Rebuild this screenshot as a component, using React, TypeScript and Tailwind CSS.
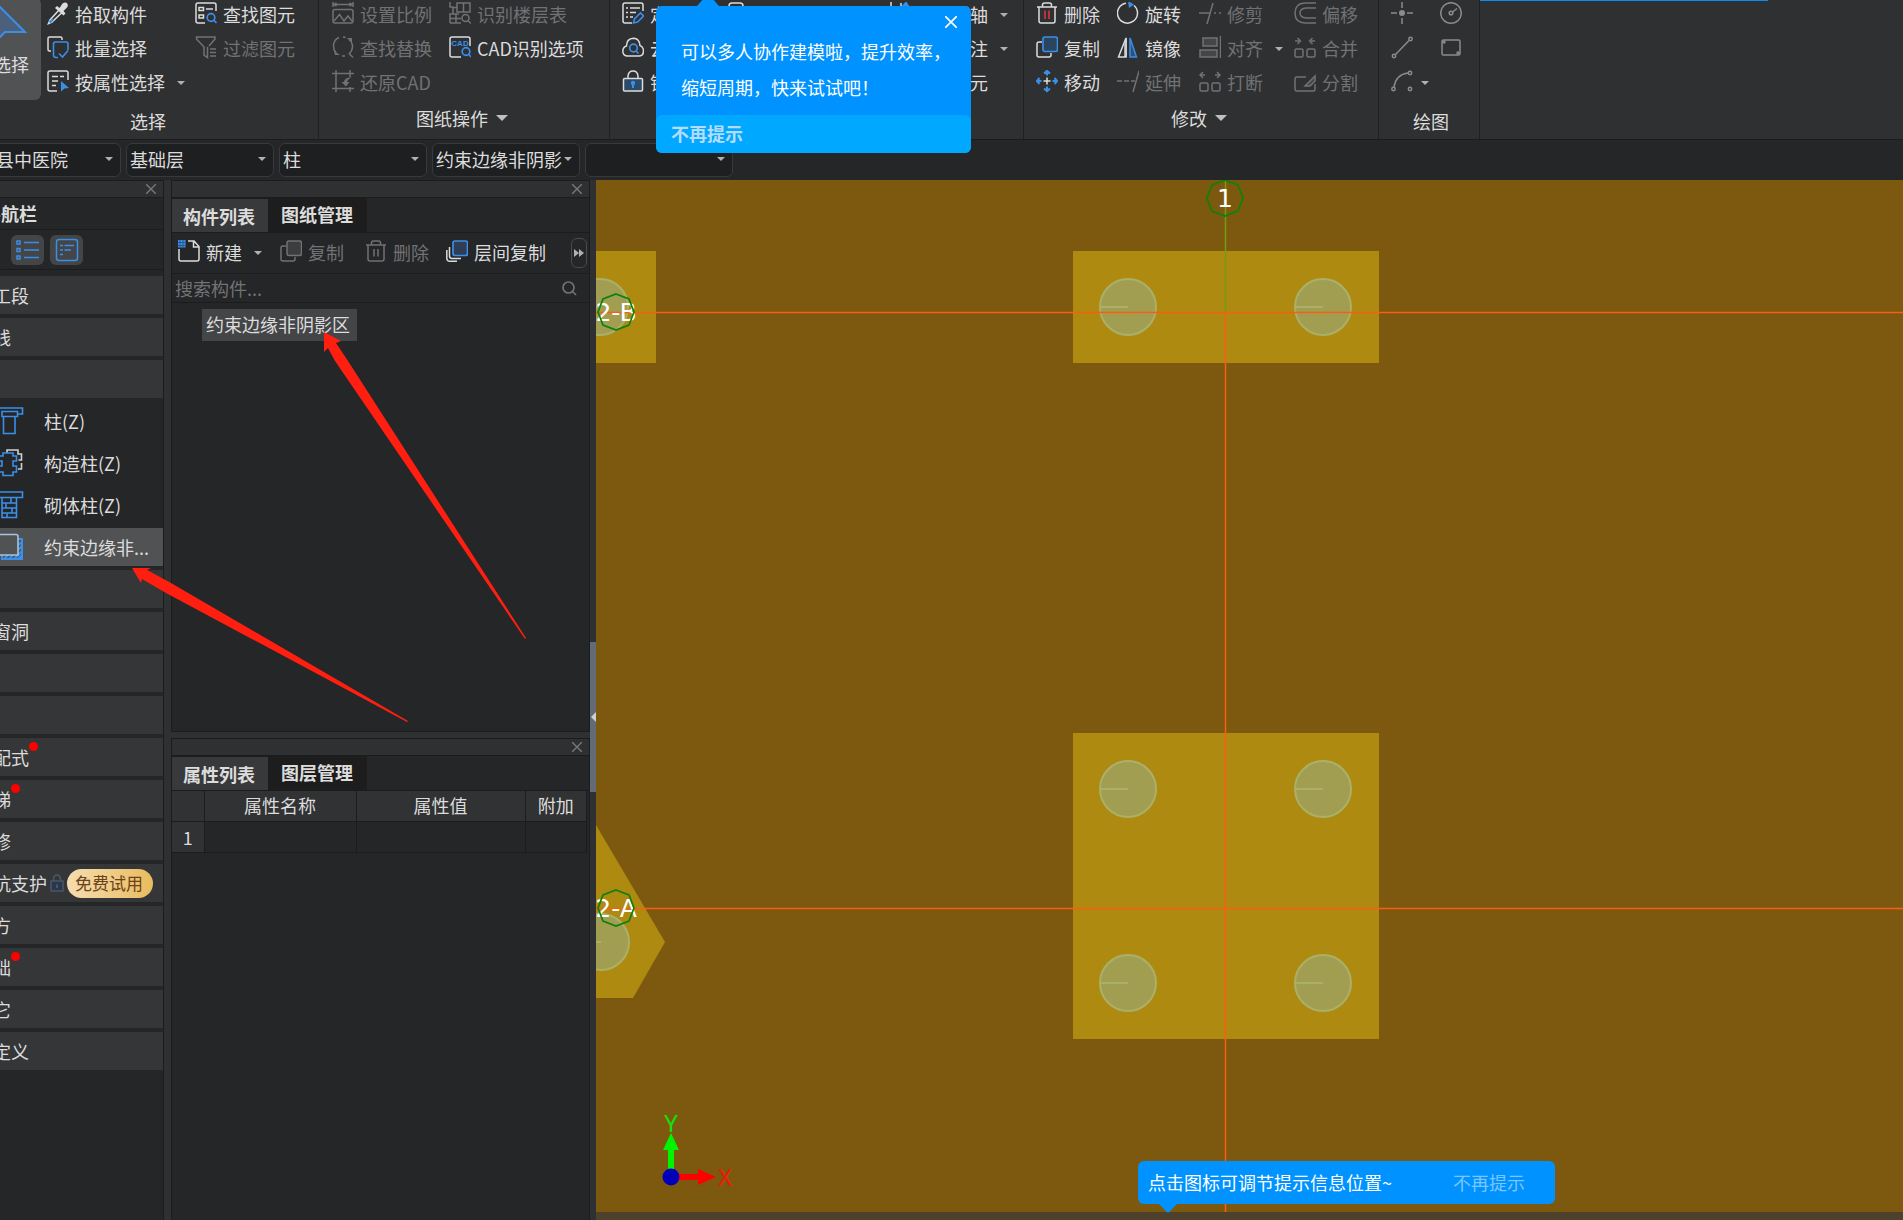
import type { ReactNode } from "react";

const BLUE = "#3a8fe8";

/* Ribbon icons are drawn on a 22px grid; the extra 4px below lifts them against the label */
function Icon({ children }: { children: ReactNode }) {
  return (
    <svg width="22" height="26" viewBox="0 0 22 26" fill="none" stroke="currentColor" strokeWidth="1.5" className="shrink-0" aria-hidden="true">
      {children}
    </svg>
  );
}

function Caret({ className = "" }: { className?: string }) {
  return (
    <svg width="8" height="4" viewBox="0 0 8 4" className={`shrink-0 ${className}`} aria-hidden="true">
      <path d="M0 0h8L4 4z" fill="#b0b1b3" />
    </svg>
  );
}

function CloseMark({ size = 10 }: { size?: number }) {
  return (
    <svg width={size} height={size} viewBox="0 0 10 10" stroke="currentColor" strokeWidth="1.4" aria-hidden="true">
      <path d="M0 0L10 10M10 0L0 10" />
    </svg>
  );
}

const icons = {
  dropper: (
    <>
      <path d="M12 8L3 18L1.500 21.500L5 20L14.500 11" />
      <path d="M8 6L10 4L12.500 6L15.500 1.500Q19 -.5 20.500 2Q21.500 4.500 19.500 6L16.500 9L18.500 11.500L16.500 13.500z" fill="currentColor" stroke="none" />
      <path d="M2.500 20.500L6 17.500" stroke={BLUE} strokeWidth="2.400" />
    </>
  ),
  batch: (
    <>
      <path d="M4 15H2.500Q1 15 1 13.500V2.500Q1 1 2.500 1H13.500Q15 1 15 2.500V4" />
      <path d="M21 14V8Q21 6 19 6H8.500Q6.500 6 6.500 8V19Q6.500 21.500 9 21.500H11M12 17.500L15.500 21L21 14.500" stroke={BLUE} strokeWidth="1.600" />
    </>
  ),
  byAttr: (
    <>
      <path d="M10 21H3Q1 21 1 19V3Q1 1 3 1H19Q21 1 21 3V10" />
      <path d="M5 6.500H11M13 6.500H17M5 11H11M5 15.500H9" />
      <path d="M14 11L22 18L17.500 18.500L14 21.500z" fill={BLUE} stroke="none" />
    </>
  ),
  findElem: (
    <>
      <path d="M10 21H3Q1 21 1 19V3Q1 1 3 1H19Q21 1 21 3V9" />
      <path d="M4 5.500H8.500V8.500H4zM4 13H8.500V16H4zM11 7H18" />
      <circle cx="16" cy="15.500" r="3.800" stroke={BLUE} strokeWidth="1.700" />
      <path d="M18.500 18L21.500 21" stroke={BLUE} strokeWidth="1.700" />
    </>
  ),
  filter: (
    <>
      <path d="M14 10L20 3V1H1.500V3L9 11V19L12.500 21.500V11" />
      <path d="M15 13H21M15 16.500H21M15 20H21" />
    </>
  ),
  scale: (
    <>
      <path d="M1 0V5M21 0V5M1 2.500H21M4.500 .8L2 2.500L4.500 4.200M17.500 .8L20 2.500L17.500 4.200" />
      <rect x="1" y="7.500" width="20" height="13.500" rx="2" />
      <path d="M2 19L7.500 12.500L12 19L16 14L20.500 19.500" />
    </>
  ),
  swap: (
    <>
      <path d="M7 1.500Q1.500 4 1.500 10Q1.500 14 4 17M11 1Q12.500 1 13.500 1.500M17 3.500Q20.500 6 20.500 11Q20 15.500 17 18" />
      <path d="M15 2H20V7z" fill="currentColor" stroke="none" />
      <path d="M2 15L8 19H3z" fill="currentColor" stroke="none" />
      <path d="M17 17.500L21 21.500M10 20H13" />
    </>
  ),
  restore: (
    <>
      <path d="M4 0V22M0 3.500H22M18 0V7M0 18.500H22M18 17V22" />
      <path d="M20 7.500Q12.500 7 12 12H9.500L14 16.500L17.500 12H15Q15.500 9 20 7.500z" fill="currentColor" stroke="none" />
    </>
  ),
  floorTable: (
    <>
      <path d="M1 0V5H4M8 1H21V10H8zM14.500 1V10M8 5.500H4V12M1 21V12H10M1 21H12M7 12V21M1 16.500H12" />
      <circle cx="16.500" cy="16" r="3.500" />
      <path d="M19 18.500L22 21.500" />
    </>
  ),
  cad: (
    <>
      <path d="M12 21H3Q1 21 1 19V3Q1 1 3 1H19Q21 1 21 3V10" />
      <text x="11" y="10" fontSize="8" fontWeight="700" textAnchor="middle" fontFamily="Liberation Sans, sans-serif" fill={BLUE} stroke="none">CAD</text>
      <circle cx="17" cy="15.500" r="3.800" stroke={BLUE} strokeWidth="1.700" />
      <path d="M19.500 18L22 21" stroke={BLUE} strokeWidth="1.700" />
    </>
  ),
  define: (
    <>
      <path d="M10 21H3Q1 21 1 19V3Q1 1 3 1H19Q21 1 21 3V9" />
      <path d="M4 6H6M8 6H18M4 10.500H6M8 10.500H14M4 15H6M8 15H11" />
      <path d="M11.500 21L12.500 17L18.500 11L21.500 14L15.500 20z" stroke={BLUE} strokeWidth="1.600" />
    </>
  ),
  cloud: (
    <>
      <path d="M5 20Q.8 19.500 .8 15Q1 11 4.500 10Q4.500 2.500 11.500 2.200Q17.500 2.500 18 9.500Q21.500 11 21.500 15Q21.300 20 17 20z" />
      <circle cx="11.500" cy="12" r="3.800" stroke={BLUE} strokeWidth="1.700" />
      <path d="M14 15L16.500 17.500" stroke={BLUE} strokeWidth="1.700" />
    </>
  ),
  lock: (
    <>
      <path d="M6 8V6Q6.500 1 11 1Q15.500 1 16 6V8" />
      <rect x="1.500" y="8.500" width="19" height="12.500" rx="1" fill="#2d4a68" />
      <path d="M11 13V18" stroke={BLUE} strokeWidth="2" />
      <circle cx="11" cy="13" r="2.200" fill={BLUE} stroke="none" />
    </>
  ),
  layers: (
    <>
      <rect x="1" y="1" width="14" height="18" rx="3" />
      <path d="M18 6V21H6" stroke={BLUE} />
    </>
  ),
  auxAxis: (
    <>
      <path d="M3 0V21M0 5H13M13 1V8" />
      <path d="M14 5L18 .5L21 5z" fill={BLUE} stroke={BLUE} />
    </>
  ),
  trash: (
    <>
      <path d="M1 5H21M6.500 5V3Q6.500 1 8.500 1H13.500Q15.500 1 15.500 3V5M3 5V19Q3 21 5 21H17Q19 21 19 19V5" />
      <path d="M9 8.500V17M13 8.500V17" stroke="#d2343e" strokeWidth="1.700" />
    </>
  ),
  copy: (
    <>
      <path d="M6 6H3Q1 6 1 8V19Q1 21 3 21H13Q15 21 15 19V17" />
      <rect x="7" y="1" width="14.500" height="14.500" rx="2" fill="#2b4560" stroke={BLUE} strokeWidth="1.600" />
    </>
  ),
  move: (
    <>
      <path d="M11 7.500V14.500M7.500 11H14.500" />
      <path d="M11 2V5.500M11 16.500V20M2 11H5.500M16.500 11H20M8 3.500L11 .8L14 3.500M8 18.500L11 21.200L14 18.500M3.500 8L.8 11L3.500 14M18.500 8L21.200 11L18.500 14" stroke={BLUE} strokeWidth="2" />
    </>
  ),
  rotate: (
    <>
      <path d="M17 3.500A10 10 0 1 1 9 1.200" />
      <path d="M11 -1L17 2.500L12 6z" fill={BLUE} stroke="none" />
    </>
  ),
  mirror: (
    <>
      <path d="M9 2V21H1.500z" />
      <path d="M7 8L10 1V21H7z" fill="currentColor" stroke="none" opacity=".7" />
      <path d="M13 2V21H19.500z" stroke={BLUE} fill="#2d5078" />
    </>
  ),
  extend: <path d="M0 11H5M7 11H12M14 11H18M22 1L16 22" />,
  trim: <path d="M0 11H11M15 11H17M20 11H22M14 1L8 22" />,
  align: (
    <>
      <rect x="4" y="2" width="14" height="8" fill="#454648" />
      <rect x="1" y="14" width="17" height="7" fill="#454648" />
      <path d="M21.500 0V22" />
    </>
  ),
  breakIt: (
    <>
      <rect x="1" y="13" width="8" height="8" rx="1.500" />
      <rect x="13" y="13" width="8" height="8" rx="1.500" />
      <path d="M1.500 5H6M4 2L1 5L4 8M20.500 5H16M18 2L21 5L18 8" />
    </>
  ),
  offset: <path d="M22 1H11Q1 1.500 1 11Q1 20.500 11 21H22M22 6H12Q6 6.500 6 11Q6 15.500 12 16H22" />,
  merge: (
    <>
      <rect x="1" y="13" width="8" height="8" rx="1.500" />
      <rect x="13" y="13" width="8" height="8" rx="1.500" />
      <path d="M1 5H5M3.500 2L6.500 5L3.500 8M21 5H17M18.500 2L15.500 5L18.500 8" />
    </>
  ),
  split: (
    <>
      <path d="M12 7H3Q1 7 1 9V19Q1 21 3 21H19Q21 21 21 19V14" />
      <path d="M11 16L21 6V11L16 16z" fill="#454648" />
    </>
  ),
  point: (
    <>
      <path d="M11 0V6M11 16V22M0 11H6M16 11H22" />
      <circle cx="11" cy="11" r="3" fill="currentColor" stroke="none" />
    </>
  ),
  circle: (
    <>
      <circle cx="11" cy="11" r="10.300" />
      <circle cx="11" cy="11" r="1.800" />
      <path d="M12.500 10L17 6.500" />
    </>
  ),
  line: (
    <>
      <circle cx="3" cy="20" r="1.700" />
      <circle cx="19.500" cy="3" r="1.700" />
      <path d="M4.500 18.500L18 4.500" />
    </>
  ),
  rect: (
    <>
      <rect x="2" y="4" width="18" height="15" rx="1.500" />
      <circle cx="4" cy="6" r="1" />
      <circle cx="18" cy="17" r="1" />
    </>
  ),
  arc: (
    <>
      <circle cx="2.500" cy="19" r="1.700" />
      <circle cx="19" cy="3" r="1.700" />
      <circle cx="19" cy="19" r="1.700" />
      <path d="M3 17Q5 4.500 17 3" />
    </>
  ),
  newFile: (
    <>
      <path d="M10 1H16L21 6.500V19Q21 21 19 21H3Q1 21 1 19V9M15.500 1V7H21" />
      <rect x="0" y="0" width="7.500" height="7.500" fill={BLUE} stroke="none" />
      <path d="M2 0V7.500M5 0V7.500M0 2.500H7.500M0 5.500H7.500" stroke="#24507c" strokeWidth=".8" />
    </>
  ),
  copyDim: (
    <>
      <path d="M6 6H3Q1 6 1 8V19Q1 21 3 21H13Q15 21 15 19V17" />
      <rect x="7" y="1" width="14.500" height="14.500" rx="2" fill="#3c3d3f" />
    </>
  ),
  trashDim: <path d="M1 5H21M6.500 5V3Q6.500 1 8.500 1H13.500Q15.500 1 15.500 3V5M3 5V19Q3 21 5 21H17Q19 21 19 19V5M9 9V16.500M13 9V16.500" />,
  floorCopy: (
    <>
      <path d="M3.500 7V16Q3.500 18.500 6 18.500H15M.8 10V18Q.8 21.300 4 21.300H11" />
      <rect x="7" y="1" width="14.500" height="14.500" rx="2" fill="#2f3d55" stroke={BLUE} strokeWidth="1.700" />
    </>
  ),
};

type IconName = keyof typeof icons;
type Tool = { icon: IconName; label: string; off?: boolean; menu?: boolean };

function ToolButton({ icon, label, off, menu }: Tool) {
  return (
    <button type="button" className={`flex h-[34px] items-center gap-1.5 whitespace-nowrap ${off ? "text-[#717274]" : "text-[#dcdcdc]"}`}>
      <Icon>{icons[icon]}</Icon>
      <span className="pb-0.5">{label}</span>
      {menu && <Caret className="ml-1.5" />}
    </button>
  );
}

function Group({ title, menu, className = "", children }: { title: string; menu?: boolean; className?: string; children: ReactNode }) {
  return (
    <section className={`flex shrink-0 flex-col border-r border-[#202123] ${className}`}>
      <div className="-mt-0.5 flex h-[102px]">{children}</div>
      <h2 className={`flex h-[33px] items-center justify-center gap-2 ${menu ? "pt-0.5 pr-1" : "pt-2"}`}>
        {title}
        {menu && (
          <svg width="12" height="6" viewBox="0 0 12 6" aria-hidden="true">
            <path d="M0 0h12L6 6z" fill="#c0c0c0" />
          </svg>
        )}
      </h2>
    </section>
  );
}

function Column({ tools, className = "" }: { tools: Tool[]; className?: string }) {
  return (
    <div className={`shrink-0 ${className}`}>
      {tools.map((t) => (
        <ToolButton key={t.label} {...t} />
      ))}
    </div>
  );
}

function DrawButton({ icon, label, menu }: Tool) {
  return (
    <button type="button" aria-label={label} className="flex h-[34px] items-center gap-1">
      <Icon>{icons[icon]}</Icon>
      {menu && <Caret className="ml-1" />}
    </button>
  );
}

function Ribbon() {
  return (
    <header className="flex h-[139px] overflow-hidden bg-[#2f3032]">
      <Group title="选择" className="-ml-[22px] w-[341px]">
        <button type="button" className="ml-[3px] flex h-[102px] w-[60px] shrink-0 flex-col items-center gap-3 rounded-md bg-[#515254] pt-2">
          <svg width="60" height="36" viewBox="0 0 60 36" aria-hidden="true">
            <path d="M12 -6L44 26H24L12 38z" fill="#4a607c" stroke={BLUE} strokeWidth="2" />
          </svg>
          <span className="leading-5">选择</span>
        </button>
        <Column
          className="ml-1.5 w-[148px]"
          tools={[
            { icon: "dropper", label: "拾取构件" },
            { icon: "batch", label: "批量选择" },
            { icon: "byAttr", label: "按属性选择", menu: true },
          ]}
        />
        <Column
          tools={[
            { icon: "findElem", label: "查找图元" },
            { icon: "filter", label: "过滤图元", off: true },
          ]}
        />
      </Group>
      <Group title="图纸操作" menu className="w-[291px]">
        <Column
          className="ml-[13px] w-[117px]"
          tools={[
            { icon: "scale", label: "设置比例", off: true },
            { icon: "swap", label: "查找替换", off: true },
            { icon: "restore", label: "还原CAD", off: true },
          ]}
        />
        <Column
          tools={[
            { icon: "floorTable", label: "识别楼层表", off: true },
            { icon: "cad", label: "CAD识别选项" },
          ]}
        />
      </Group>
      <Group title="" className="w-[414px]">
        <Column
          className="ml-3 w-[106px]"
          tools={[
            { icon: "define", label: "定义" },
            { icon: "cloud", label: "云" },
            { icon: "lock", label: "锁" },
          ]}
        />
        <Column className="w-[160px]" tools={[{ icon: "layers", label: "复制到其它层" }]} />
        <Column
          tools={[
            { icon: "auxAxis", label: "两点辅轴", menu: true },
            { icon: "auxAxis", label: "长度标注", menu: true },
            { icon: "auxAxis", label: "转换图元" },
          ]}
        />
      </Group>
      <Group title="修改" menu className="w-[355px]">
        <Column
          className="ml-3 w-[81px]"
          tools={[
            { icon: "trash", label: "删除" },
            { icon: "copy", label: "复制" },
            { icon: "move", label: "移动" },
          ]}
        />
        <Column
          className="w-[82px]"
          tools={[
            { icon: "rotate", label: "旋转" },
            { icon: "mirror", label: "镜像" },
            { icon: "extend", label: "延伸", off: true },
          ]}
        />
        <Column
          className="w-[95px]"
          tools={[
            { icon: "trim", label: "修剪", off: true },
            { icon: "align", label: "对齐", off: true, menu: true },
            { icon: "breakIt", label: "打断", off: true },
          ]}
        />
        <Column
          tools={[
            { icon: "offset", label: "偏移", off: true },
            { icon: "merge", label: "合并", off: true },
            { icon: "split", label: "分割", off: true },
          ]}
        />
      </Group>
      <Group title="绘图" className="w-[101px] [&>h2]:pl-1">
        <div className="ml-3 w-[49px] text-[#8a8b8d]">
          <DrawButton icon="point" label="点" />
          <DrawButton icon="line" label="直线" />
          <DrawButton icon="arc" label="弧" menu />
        </div>
        <div className="text-[#8a8b8d]">
          <DrawButton icon="circle" label="圆" />
          <DrawButton icon="rect" label="矩形" />
        </div>
      </Group>
      <div className="h-px w-[288px] bg-[#0a8cf5]" />
    </header>
  );
}

function Combo({ label, value, className = "" }: { label: string; value: string; className?: string }) {
  return (
    <div className={`relative h-[34px] w-[148px] shrink-0 ${className}`}>
      <select aria-label={label} defaultValue={value} className="h-full w-full appearance-none rounded-md border border-[#38393b] bg-[#1e1f21] pb-0.5 pl-[3px] text-[#dcdcdc]">
        <option value={value}>{value}</option>
      </select>
      <Caret className="pointer-events-none absolute top-3.5 right-2" />
    </div>
  );
}

type NavRow = { id: string; label?: string; dot?: boolean; trial?: boolean; icon?: ReactNode; active?: boolean };

const navRows: NavRow[] = [
  { id: "section", label: "施工段" },
  { id: "axis", label: "轴线" },
  { id: "column" },
  {
    id: "z1",
    label: "柱(Z)",
    icon: <path d="M-2 1H22.500V7H18M2 4.500H17.500V9.500H2zM3.500 9.500V26.500H15V9.500" />,
  },
  {
    id: "z2",
    label: "构造柱(Z)",
    icon: (
      <>
        <path d="M7 4V1H18V5H21.500V11H18.500M21.500 14V20H18" stroke="#d0d0d0" />
        <path d="M3 4H13V7H16.500V12H13V17H16.500V23H13V26.500H3V23H-1V17H2V12H-1V7H3z" />
      </>
    ),
  },
  {
    id: "z3",
    label: "砌体柱(Z)",
    icon: <path d="M-2 1H22.500V6.500H-2M2 6.500V26.500H16.500V6.500M2 12H16.500M2 17H16.500M2 22H16.500M11 6.500V12M6 12V17M12 17V22M7 22V26.500" />,
  },
  {
    id: "z4",
    label: "约束边缘非...",
    active: true,
    icon: (
      <>
        <path d="M18 6H22V26H2V22M18 12L22 9M18 17L22 13M18 22L22 18M14 26L18 22M9 26L13 22M4 26L8 22M18 26L22 22" strokeWidth="2" />
        <path d="M-2 1.500H16Q18 1.500 18 3.500V22H-2" stroke="#a9c3dc" fill="#515254" />
      </>
    ),
  },
  { id: "wall" },
  { id: "opening", label: "门窗洞" },
  { id: "beam" },
  { id: "slab" },
  { id: "prefab", label: "装配式", dot: true },
  { id: "stairs", label: "楼梯", dot: true },
  { id: "finish", label: "装修" },
  { id: "pit", label: "基坑支护", trial: true },
  { id: "earth", label: "土方" },
  { id: "base", label: "基础", dot: true },
  { id: "other", label: "其它" },
  { id: "custom", label: "自定义" },
];

function NavItem({ row }: { row: NavRow }) {
  if (row.icon) {
    return (
      <button type="button" className={`flex h-[38px] w-full items-center gap-5 whitespace-nowrap ${row.active ? "bg-[#515254]" : ""}`}>
        <svg width="24" height="28" viewBox="0 0 24 28" fill="none" stroke={BLUE} strokeWidth="1.600" aria-hidden="true">
          {row.icon}
        </svg>
        {row.label}
      </button>
    );
  }
  return (
    <button type="button" aria-label={row.label ? undefined : row.id} className="flex h-[38px] w-full items-center bg-[#353638] whitespace-nowrap">
      {row.label && <span className="-ml-[25px]">{row.label}</span>}
      {row.dot && <span className="mt-1 size-[9px] self-start rounded-full bg-[#ff0000]" />}
      {row.trial && (
        <>
          <svg width="14" height="18" viewBox="0 0 14 18" fill="none" stroke="#4a5669" strokeWidth="1.500" className="ml-[3px]" aria-hidden="true">
            <path d="M3.500 7V4.500Q4 1 7 1Q10 1 10.500 4.500V7" />
            <rect x="1" y="7" width="12" height="10" fill="#2b3748" />
            <path d="M7 10.500V14" strokeWidth="2" />
          </svg>
          <span className="ml-[3px] flex h-[29px] w-[86px] items-center justify-center rounded-full bg-linear-to-r from-[#f5dcb0] to-[#e9bc5c] pr-0.5 text-[17px] text-[#6d4216]">
            免费试用
          </span>
        </>
      )}
    </button>
  );
}

function PanelStrip() {
  return (
    <div className="flex h-[18px] items-center justify-end border-y border-[#1b1c1e] bg-[#2f3032] pr-[7px] text-[#77787a]">
      <button type="button" aria-label="关闭">
        <CloseMark />
      </button>
    </div>
  );
}

function NavPanel() {
  return (
    <aside className="w-[164px] shrink-0 overflow-hidden border-r border-[#1b1c1e] bg-[#252628]">
      <PanelStrip />
      <h2 className="flex h-8 items-center border-b border-[#1b1c1e] pb-0.5 font-bold">
        <span className="-ml-[17px] whitespace-nowrap">导航栏</span>
      </h2>
      <div className="flex h-10 items-center gap-1.5 border-b border-[#1b1c1e] pl-[11px]">
        <button type="button" aria-label="列表" className="flex h-[30px] w-[33px] items-center justify-center rounded-md bg-[#444547]">
          <svg width="24" height="22" viewBox="0 0 24 22" fill="none" stroke={BLUE} strokeWidth="1.500" aria-hidden="true">
            <path d="M1 2H4V5H1zM1 9.500H4V12.500H1zM1 17H4V20H1zM8 3.500H23M8 11H23M8 18.500H23" />
          </svg>
        </button>
        <button type="button" aria-label="详情" className="flex h-[30px] w-[33px] items-center justify-center rounded-md bg-[#444547]">
          <svg width="24" height="24" viewBox="0 0 24 24" fill="none" stroke={BLUE} strokeWidth="1.500" aria-hidden="true">
            <rect x="1.500" y="1.500" width="21" height="21" rx="2.500" />
            <path d="M5 7.500H8M9.500 7.500H19M5 12H8M9.500 12H16M5 16.500H8" />
          </svg>
        </button>
      </div>
      <nav className="space-y-1 pt-1.5">
        {navRows.map((row) => (
          <NavItem key={row.id} row={row} />
        ))}
      </nav>
    </aside>
  );
}

function Tabs({ active, other }: { active: string; other: string }) {
  return (
    <div className="flex h-[35px] border-b border-[#1b1c1e] font-bold">
      <button type="button" className="w-24 border-t border-[#1b1c1e] bg-[#38393b] pr-0.5">{active}</button>
      <button type="button" className="w-[99px] border-l border-[#1b1c1e] bg-[#1d1d1d] pr-0.5 pb-0.5">{other}</button>
    </div>
  );
}

function ComponentPanel() {
  return (
    <section className="flex h-[552px] flex-col border-x border-b border-[#1b1c1e] bg-[#252628]">
      <PanelStrip />
      <Tabs active="构件列表" other="图纸管理" />
      <div className="flex h-[41px] items-center border-b border-[#1b1c1e] pl-1.5">
        <div className="w-[102px]">
          <ToolButton icon="newFile" label="新建" menu />
        </div>
        <div className="w-[85px]">
          <ToolButton icon="copyDim" label="复制" off />
        </div>
        <div className="w-[81px]">
          <ToolButton icon="trashDim" label="删除" off />
        </div>
        <ToolButton icon="floorCopy" label="层间复制" />
        <button type="button" aria-label="更多" className="mr-0.5 ml-auto flex h-[30px] w-4 items-center justify-center rounded-md border border-[#4a4b4d] text-[#b0b1b3]">
          <svg width="10" height="8" viewBox="0 0 10 8" fill="currentColor" aria-hidden="true">
            <path d="M0 0L5 4L0 8zM5 0L10 4L5 8z" />
          </svg>
        </button>
      </div>
      <label className="flex h-[29px] shrink-0 items-center border-b border-[#1b1c1e] pr-3 pl-[3px]">
        <input type="text" aria-label="搜索构件" placeholder="搜索构件..." className="min-w-0 flex-1 bg-transparent outline-none placeholder:text-[#717274]" />
        <svg width="15" height="15" viewBox="0 0 15 15" fill="none" stroke="#717274" strokeWidth="1.700" aria-hidden="true">
          <circle cx="6.500" cy="6.500" r="5.500" />
          <path d="M10.500 10.500L14 14" />
        </svg>
      </label>
      <ul className="pt-1.5 pl-[30px]">
        <li className="flex h-8 w-[155px] items-center bg-[#444547] pb-0.5 pl-1 whitespace-nowrap">约束边缘非阴影区</li>
      </ul>
    </section>
  );
}

function PropertyPanel() {
  return (
    <section className="mt-1.5 flex-1 border-x border-[#1b1c1e] bg-[#252628]">
      <PanelStrip />
      <Tabs active="属性列表" other="图层管理" />
      <table className="w-[415px] table-fixed border-collapse text-center">
        <thead>
          <tr className="h-[30px] bg-[#313234]">
            <th className="w-8 border-r border-b border-[#1b1c1e]" />
            <th className="w-[152px] border-r border-b border-[#1b1c1e] p-0 pb-0.5 font-normal">属性名称</th>
            <th className="w-[169px] border-r border-b border-[#1b1c1e] p-0 pb-0.5 font-normal">属性值</th>
            <th className="border-r border-b border-[#1b1c1e] p-0 pb-0.5 font-normal">附加</th>
          </tr>
        </thead>
        <tbody>
          <tr className="h-[31px]">
            <td className="border-r border-b border-[#1b1c1e] bg-[#313234] p-0">1</td>
            <td className="border-r border-b border-[#1b1c1e]" />
            <td className="border-r border-b border-[#1b1c1e]" />
            <td className="border-r border-b border-[#1b1c1e]" />
          </tr>
        </tbody>
      </table>
    </section>
  );
}

const piles = [
  [4, 127],
  [532, 127],
  [727, 127],
  [532, 609],
  [727, 609],
  [532, 803],
  [727, 803],
  [5, 762],
];

const bubbles = [
  { x: 629, y: 18, label: "1" },
  { x: 20, y: 132, label: "2-B" },
  { x: 20, y: 728, label: "2-A" },
];

function Drawing() {
  return (
    <div className="relative min-w-0 flex-1 overflow-hidden bg-[#7d590f]">
      <svg className="absolute inset-0 h-full w-full" role="img" aria-label="模型视图">
        <g fill="#ae8a10">
          <rect x="0" y="71" width="60" height="112" />
          <rect x="477" y="71" width="306" height="112" />
          <rect x="477" y="553" width="306" height="306" />
          <path d="M0 645L69 762L37 818H0z" />
        </g>
        {piles.map(([x, y]) => (
          <g key={`${x}-${y}`} stroke="#abb068" strokeWidth="2">
            <circle cx={x} cy={y} r="28" fill="#a19e52" />
            <path d={`M${x - 28} ${y}H${x}`} />
          </g>
        ))}
        <g stroke="#f85f14" strokeWidth="1.500">
          <line x1="0" y1="132.5" x2="100%" y2="132.5" />
          <line x1="0" y1="728.5" x2="100%" y2="728.5" />
          <line x1="629.5" y1="132" x2="629.5" y2="100%" />
          <line x1="629.5" y1="0" x2="629.5" y2="132" stroke="#779a14" />
        </g>
        {bubbles.map(({ x, y, label }) => (
          <g key={label}>
            <text x={x} y={y + 9} textAnchor="middle" fill="#ffffff" fontSize="25" fontFamily="DejaVu Sans, sans-serif">{label}</text>
            <polygon
              points="0,-18 13,-13 18,0 13,13 0,18 -13,13 -18,0 -13,-13"
              transform={`translate(${x} ${y})`}
              fill="none"
              stroke="#0b820b"
              strokeWidth="1.700"
            />
          </g>
        ))}
        <g fontSize="24" fontFamily="Noto Sans, sans-serif" textAnchor="middle">
          <path d="M72 990V970H67L75 953L83 970H78V990z" fill="#00f500" />
          <path d="M83 994H102V989L120 997L102 1005V1000H83z" fill="#ff0000" />
          <circle cx="75" cy="997" r="8.500" fill="#0000b8" />
          <text x="75" y="952" fill="#10e010">Y</text>
          <text x="129" y="1006" fill="#f01808">X</text>
        </g>
      </svg>
      <div className="absolute inset-x-0 bottom-0 h-2 bg-[#4d412c]" />
      <div role="status" className="absolute bottom-4 left-[542px] flex h-[43px] w-[417px] items-center justify-between rounded-md bg-[#0092ff] pr-[30px] pb-0.5 pl-2.5 text-white">
        点击图标可调节提示信息位置~
        <button type="button" className="text-[#7cc6ff]">不再提示</button>
        <svg width="18" height="9" viewBox="0 0 18 9" className="absolute top-full left-[21px]" aria-hidden="true">
          <path d="M0 0H18L9 9z" fill="#0092ff" />
        </svg>
      </div>
    </div>
  );
}

function CoopTip() {
  return (
    <div role="dialog" aria-label="多人协作" className="absolute top-1.5 left-[656px] w-[315px] rounded-md bg-[#0092ff] text-white">
      <svg width="22" height="10" viewBox="0 0 22 10" className="absolute bottom-full left-[41px]" aria-hidden="true">
        <path d="M0 10L8 1H14L22 10z" fill="#0092ff" />
      </svg>
      <button type="button" aria-label="关闭" className="absolute top-[10px] right-3.5">
        <CloseMark size={12} />
      </button>
      <p className="h-[109px] pt-[27px] pl-[25px] leading-9 whitespace-nowrap">
        可以多人协作建模啦，提升效率，
        <br />
        缩短周期，快来试试吧！
      </p>
      <button type="button" className="flex h-[38px] w-full items-center rounded-md bg-[#00a9ff] pb-0.5 pl-[15px] font-bold text-[#b4dcff]">
        不再提示
      </button>
    </div>
  );
}

export default function App() {
  return (
    <div className="relative flex min-h-screen flex-col overflow-hidden bg-[#2f3032] font-['Noto_Sans_CJK_SC',sans-serif] text-[18px] leading-6 text-[#dcdcdc]">
      <Ribbon />
      <div className="flex h-[41px] items-center gap-[5px] border-t border-[#1b1c1e] bg-[#252628]">
        <Combo label="工程" value="县中医院" className="-ml-[27px] [&>select]:pl-[22px]" />
        <Combo label="楼层" value="基础层" />
        <Combo label="构件类型" value="柱" />
        <Combo label="构件" value="约束边缘非阴影" />
        <Combo label="图元" value="" />
      </div>
      <main className="flex flex-1">
        <NavPanel />
        <div className="ml-[7px] flex w-[419px] shrink-0 flex-col">
          <ComponentPanel />
          <PropertyPanel />
        </div>
        <div className="w-1.5 shrink-0 pt-[462px]">
          <button type="button" aria-label="收起面板" className="flex h-[150px] w-1.5 items-center bg-[#636a78] text-[#d0d0d0]">
            <svg width="6" height="10" viewBox="0 0 6 10" fill="currentColor" aria-hidden="true">
              <path d="M6 0V10L1 5z" />
            </svg>
          </button>
        </div>
        <Drawing />
      </main>
      <CoopTip />
      <svg className="pointer-events-none absolute top-0 left-0 h-[760px] w-[596px]" fill="#ff1f10" aria-hidden="true">
        <path d="M324 332L341 341L336 343L348 361L526 638L525 639L335 361L328 348L324 352z" />
        <path d="M132 568H151L147 570L171 583L408 721L407 722L166 593L142 579L141 583z" />
      </svg>
    </div>
  );
}
